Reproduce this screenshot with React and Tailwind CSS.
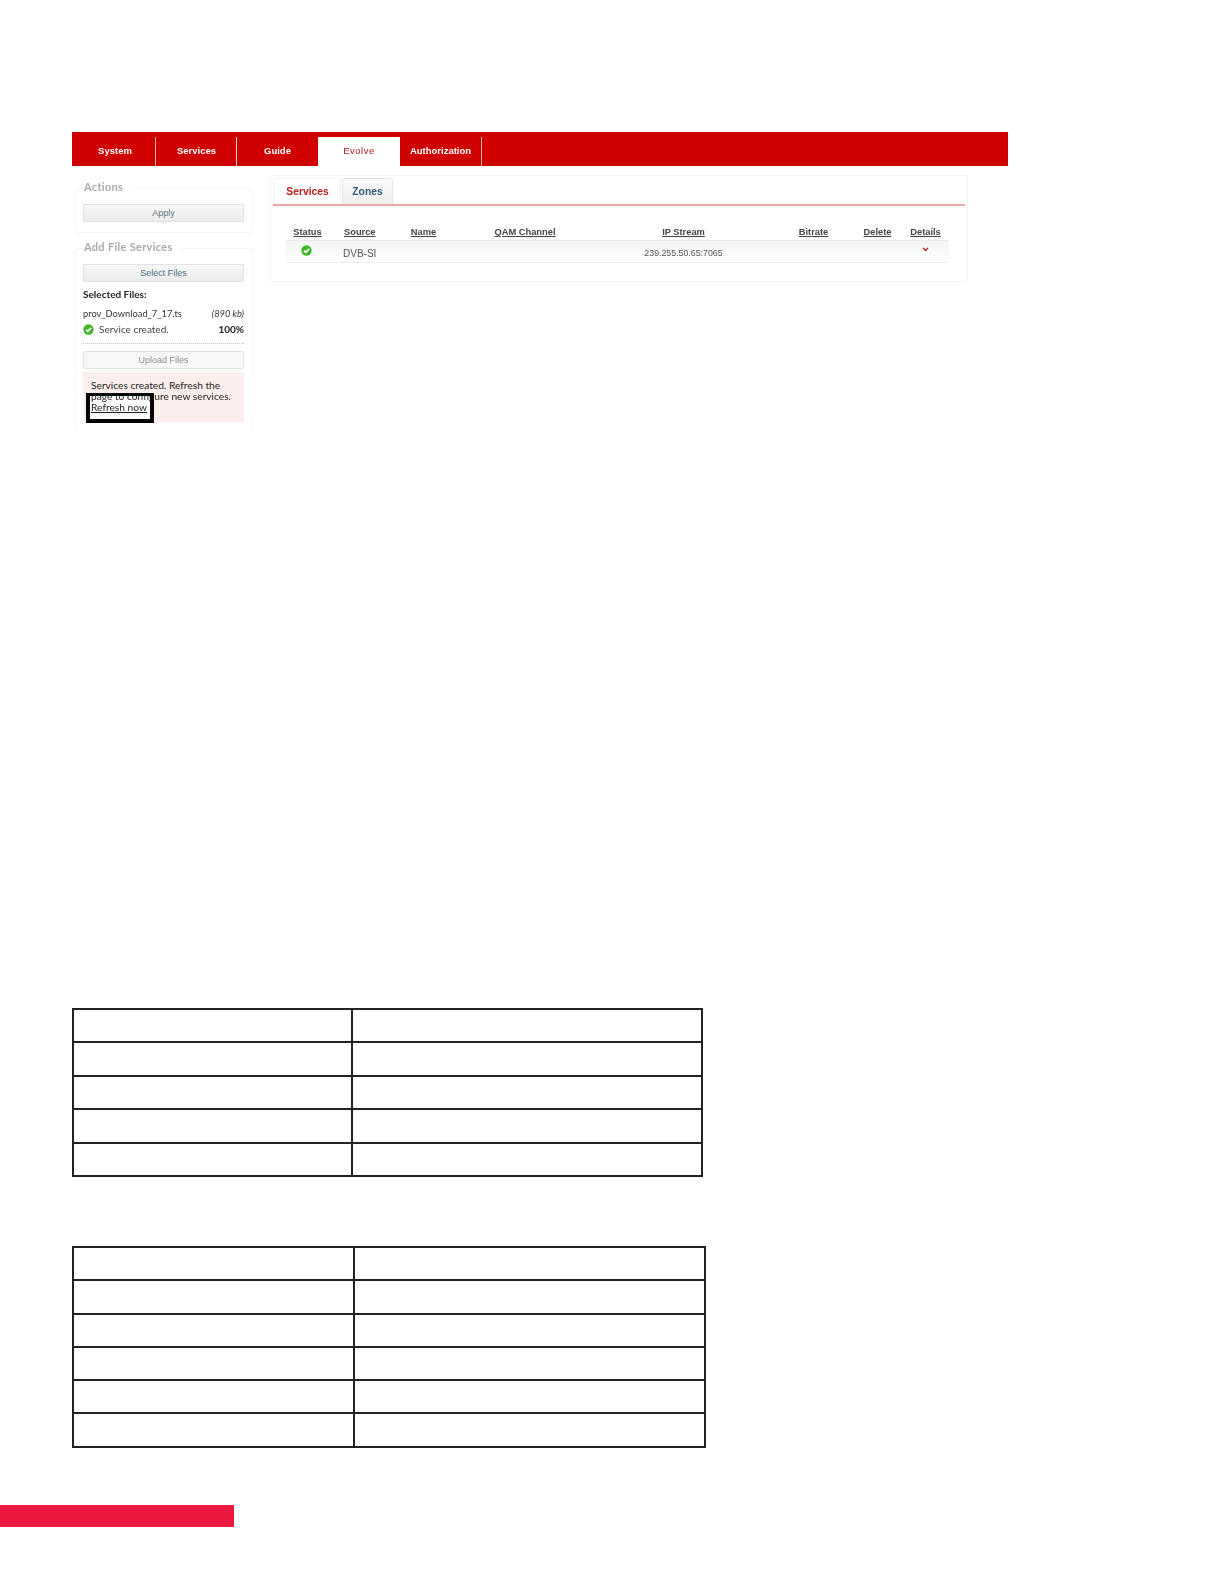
import React from 'react';

const Check = ({ className }) => (
  <svg viewBox="0 0 12 12" className={className}>
    <circle cx="6" cy="6" r="5.6" fill="#3fb52a" />
    <path d="M3.2 6.1 5.2 8 8.9 4.2" fill="none" stroke="#fff" strokeWidth="1.7" />
  </svg>
);

const navItems = [
  { label: 'System', cls: 'w-[84px] pl-[3px] text-white font-bold border-r border-[#f3b0a8]' },
  { label: 'Services', cls: 'w-[81px] pl-[1px] text-white font-bold border-r border-[#f7d0cc]' },
  { label: 'Guide', cls: 'w-[81px] text-white font-bold' },
  { label: 'Evolve', cls: 'w-[82px] bg-white text-[#a81c18] tracking-[0.5px]' },
  { label: 'Authorization', cls: 'w-[82px] text-white font-bold border-r border-[#f3b0a8]' },
];

const columns = ['Status', 'Source', 'Name', 'QAM Channel', 'IP Stream', 'Bitrate', 'Delete', 'Details'];

const GridTable = ({ rows, className, leftCol, rowCls }) => (
  <table className={`border-collapse table-fixed ${className}`}>
    <tbody>
      {Array.from({ length: rows }).map((_, i) => (
        <tr key={i} className={rowCls}>
          <td className={`border-2 border-[#222] ${leftCol}`}></td>
          <td className="border-2 border-[#222]"></td>
        </tr>
      ))}
    </tbody>
  </table>
);

const Button = ({ children, className }) => (
  <div className={`h-[18px] pt-[1px] flex items-center justify-center text-[9px] border border-[#e2e2e2] ${className}`}>
    {children}
  </div>
);

export default function App() {
  return (
    <div className="w-[1224px] h-[1584px] bg-white flex flex-col font-['Liberation_Sans',sans-serif]">
      {/* Screenshot inside the document */}
      <div className="mt-[132px] ml-[72px] w-[936px] h-[297px] shrink-0 blur-[0.5px] overflow-hidden">
        <div className="h-[34px] bg-[#d00000] flex items-end">
          {navItems.map((item) => (
            <div key={item.label} className={`h-[29px] flex items-center justify-center text-[9.5px] ${item.cls}`}>
              {item.label}
            </div>
          ))}
        </div>

        <div className="flex items-start">
          {/* Left column */}
          <div className="ml-[3px] w-[178px] shrink-0">
            <div className="relative mt-[22px] h-[45px] border border-[#f4f4f4] rounded-[4px] pl-[7px] pr-[8px] pt-[15px]">
              <span className="absolute -top-[9px] left-[8px] bg-white pr-2 font-['Lato',sans-serif] font-bold tracking-[0.3px] text-[11px] leading-[13px] text-[#aaaaaa]">Actions</span>
              <Button className="text-[#5e7480] bg-gradient-to-b from-[#f8f8f8] to-[#ebebeb]">Apply</Button>
            </div>

            <div className="relative mt-[15px] h-[190px] border border-[#f4f4f4] border-b-0 rounded-t-[4px] pl-[7px] pr-[8px] pt-[15px]">
              <span className="absolute -top-[9px] left-[8px] bg-white pr-2 font-['Lato',sans-serif] font-bold tracking-[0.3px] text-[11px] leading-[13px] text-[#aaaaaa]">Add File Services</span>
              <Button className="text-[#3f6c80] bg-gradient-to-b from-[#f8f8f8] to-[#ebebeb]">Select Files</Button>
              <div className="mt-[6px] h-[13px] font-['Lato',sans-serif] font-bold text-[10px] leading-[13px] text-[#222]">Selected Files:</div>
              <div className="mt-[6px] h-[13px] flex justify-between font-['Lato',sans-serif] text-[9.3px] leading-[13px] text-[#333]">
                <span>prov_Download_7_17.ts</span>
                <span className="italic">(890 kb)</span>
              </div>
              <div className="mt-[3px] h-[13px] flex items-center font-['Lato',sans-serif] text-[10px] leading-[13px] text-[#444]">
                <Check className="w-[11px] h-[11px] mr-[5px]" />
                <span>Service created.</span>
                <span className="ml-auto font-bold text-[#222]">100%</span>
              </div>
              <div className="mt-[7px] border-t border-dotted border-[#c4c4c4]"></div>
              <Button className="mt-[7px] text-[#8d8d8d] rounded-[2px] bg-[#f7f7f7]">Upload Files</Button>
              <div className="relative mt-[3px] h-[50px] bg-[#fdeeee] pl-[8px] pt-[8px] font-['Lato',sans-serif] text-[10.2px] leading-[11px] text-[#222]">
                <div>Services created. Refresh the</div>
                <div className="absolute left-[3px] top-[21px] w-[68px] h-[30px] bg-white"></div>
                <div className="relative">page to configure new services.</div>
                <div className="relative underline">Refresh now</div>
                {/* callout drawn over the text */}
                <div className="absolute left-[3px] top-[21px] w-[68px] h-[30px] border-[4px] border-t-[3px] border-black"></div>
              </div>
            </div>
          </div>

          {/* Right panel */}
          <div className="ml-[17px] mt-[9px] w-[698px] h-[107px] border border-[#f4f4f4] rounded-[2px] shrink-0">
            <div className="mx-[2px] pl-[1px] mt-[2px] h-[28px] flex items-end gap-[1px] border-b-2 border-[#eba6a6] text-[10.3px] font-bold">
              <div className="w-[67px] h-[26px] flex items-center justify-center border border-b-0 border-[#f4f4f4] text-[#b3201c]">Services</div>
              <div className="w-[51px] h-[26px] flex items-center justify-center border border-b-0 border-[#e6e6e6] rounded-t-[4px] bg-gradient-to-b from-[#fafafa] to-[#eeeeee] text-[#2f5a78]">Zones</div>
            </div>

            <div className="mx-[15px] mt-[20px] grid grid-cols-[43px_58px_73px_130px_187px_73px_55px_41px_3px] h-[13px] text-[9.3px] leading-[13px] font-bold text-[#444]">
              {columns.map((col) => (
                <div key={col} className={col === 'Source' ? 'pl-[15px]' : 'text-center'}>
                  <span className="underline">{col}</span>
                </div>
              ))}
            </div>

            <div className="ml-[15px] mt-[1px] w-[663px] h-[23px] grid grid-cols-[41px_60px_73px_130px_187px_73px_55px_41px_3px] items-center border-y border-[#ebebeb] bg-gradient-to-b from-[#f4f4f4] to-[#fdfdfd] text-[10px] text-[#555]">
              <div className="flex justify-center"><Check className="w-[11px] h-[11px] -mt-[2px]" /></div>
              <div className="pl-[16px] pt-[3px]">DVB-SI</div>
              <div></div>
              <div></div>
              <div className="text-center pt-[5px] text-[8.8px]">239.255.50.65:7065</div>
              <div></div>
              <div></div>
              <div className="flex justify-center">
                <svg viewBox="0 0 8 6" className="w-[7px] h-[5px] -mt-[4px]">
                  <path d="M1 1 4 4.2 7 1" fill="none" stroke="#c0141a" strokeWidth="1.6" />
                </svg>
              </div>
              <div></div>
            </div>
          </div>
        </div>
      </div>

      <GridTable rows={5} className="mt-[579px] ml-[72px] w-[631px] shrink-0" leftCol="w-[279px]" rowCls="h-[33.4px]" />
      <GridTable rows={6} className="mt-[69px] ml-[72px] w-[634px] shrink-0" leftCol="w-[281px]" rowCls="h-[33.3px]" />

      <div className="mt-[57px] w-[234px] h-[22px] bg-[#ed1840] shrink-0"></div>
    </div>
  );
}
